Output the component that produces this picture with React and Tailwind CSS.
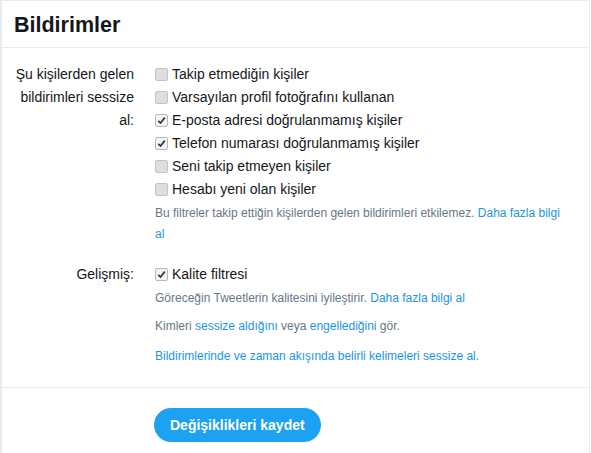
const font = { fontFamily: '"Liberation Sans", Arial, sans-serif' };

function Box({ checked }) {
  return (
    <span
      className={
        "flex h-[13px] w-[13px] shrink-0 items-center justify-center rounded-[2px] border " +
        (checked ? "border-[#b9b9b9] bg-[#f4f4f4]" : "border-[#c4c4c4] bg-[#dedede]")
      }
    >
      {checked && (
        <svg width="9" height="9" viewBox="0 0 9 9">
          <path d="M1.3 4.8 L3.5 7 L7.8 1.6" fill="none" stroke="#333" strokeWidth="1.7" />
        </svg>
      )}
    </span>
  );
}

function Row({ checked, children }) {
  return (
    <div className="flex h-[23px] items-center gap-[4px] text-[14px] text-[#14171a]">
      <Box checked={checked} />
      <span>{children}</span>
    </div>
  );
}

const muted = [
  ["Takip etmediğin kişiler", false],
  ["Varsayılan profil fotoğrafını kullanan", false],
  ["E-posta adresi doğrulanmamış kişiler", true],
  ["Telefon numarası doğrulanmamış kişiler", true],
  ["Seni takip etmeyen kişiler", false],
  ["Hesabı yeni olan kişiler", false],
];

export default function App() {
  return (
    <div style={font} className="h-[453px] w-[590px] border-l-2 border-r border-t border-[#e6ecf0] bg-white">
      <div className="flex h-[47px] items-center border-b border-[#e6ecf0] px-[12px] pt-[3px]">
        <h1 className="text-[21.5px] font-bold text-[#14171a]">Bildirimler</h1>
      </div>

      <div className="grid grid-cols-[134px_1fr] gap-x-[19px] pb-[20px] pr-[28px] pt-[15px]">
        <div className="pl-[9px] pr-[2px] text-right text-[14px] leading-[23px] text-[#14171a]">
          Şu kişilerden gelen bildirimleri sessize al:
        </div>
        <div>
          {muted.map(([t, c]) => (
            <Row key={t} checked={c}>
              {t}
            </Row>
          ))}
          <p className="mt-[2px] text-[12px] leading-[21px] text-[#657786]">
            Bu filtreler takip ettiğin kişilerden gelen bildirimleri etkilemez.{" "}
            <span className="text-[#1b95e0]">Daha fazla bilgi al</span>
          </p>
        </div>

        <div className="mt-[18px] pr-[2px] text-right text-[14px] leading-[23px] text-[#14171a]">Gelişmiş:</div>
        <div className="mt-[18px]">
          <Row checked>Kalite filtresi</Row>
          <p className="mt-[2px] text-[12px] leading-[21px] text-[#657786]">
            Göreceğin Tweetlerin kalitesini iyileştirir.{" "}
            <span className="text-[#1b95e0]">Daha fazla bilgi al</span>
          </p>
          <p className="mt-[7px] text-[12px] leading-[21px] text-[#657786]">
            Kimleri <span className="text-[#1b95e0]">sessize aldığını</span> veya{" "}
            <span className="text-[#1b95e0]">engellediğini</span> gör.
          </p>
          <p className="mt-[9px] text-[12px] leading-[21px] text-[#1b95e0]">
            Bildirimlerinde ve zaman akışında belirli kelimeleri sessize al.
          </p>
        </div>
      </div>

      <div className="border-t border-[#e6ecf0] pl-[152px] pt-[20px]">
        <button className="h-[34px] rounded-full bg-[#1da1f2] px-[16px] text-[14px] font-bold text-white">
          Değişiklikleri kaydet
        </button>
      </div>
    </div>
  );
}
